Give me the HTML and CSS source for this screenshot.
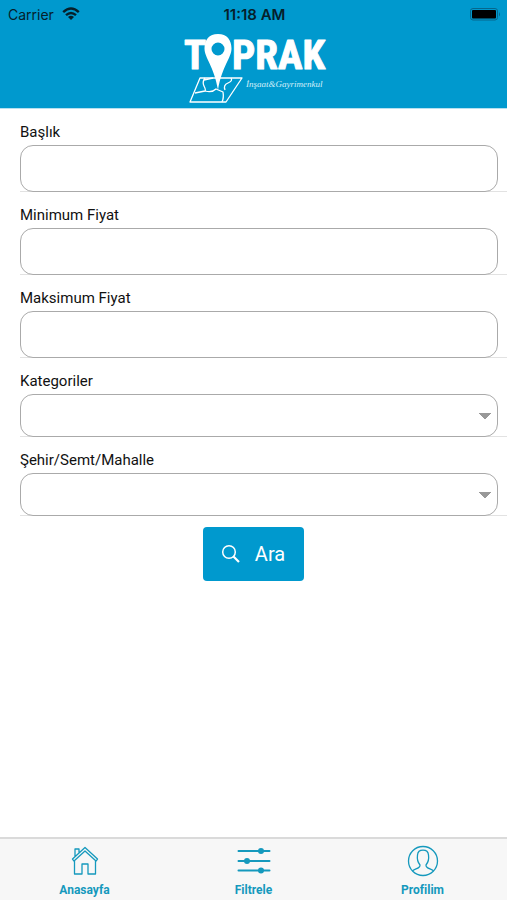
FILE: index.html
```html
<!DOCTYPE html>
<html lang="tr">
<head>
<meta charset="utf-8">
<meta name="viewport" content="width=device-width, initial-scale=1">
<title>Toprak</title>
<link rel="stylesheet" href="styles.css">
</head>
<body>
<header class="header">
  <div class="status">
    <div class="carrier">
      <span>Carrier</span>
      <svg width="18" height="14" viewBox="0 0 18 14" fill="none" stroke="#06202b" stroke-width="2.4">
        <path d="M1.2 5.2Q9-2 16.8 5.2M4 8.2Q9 3.6 14 8.2"/>
        <path d="M6 10Q9 7.4 12 10L9 13Z" fill="#06202b" stroke="none"/>
      </svg>
    </div>
    <time class="clock">11:18 AM</time>
    <svg class="battery" width="31" height="13" viewBox="0 0 31 13">
      <rect x=".5" y=".5" width="27" height="11.5" rx="2.5" fill="none" stroke="#06678c"/>
      <rect x="2" y="2" width="24" height="8.5" rx="1" fill="#000"/>
      <path d="M29 4q2 2.3 0 4.600z" fill="#06678c"/>
    </svg>
  </div>
  <svg class="logo" width="142" height="72" viewBox="0 0 142 72" role="img" aria-label="Toprak İnşaat &amp; Gayrimenkul">
    <g fill="none" stroke="#fff" stroke-width="1.300" stroke-linejoin="round">
      <path d="M17 46H59L43 70H7Z"/>
      <path d="M22 46Q19 50 21 54T22 59L12 61M22 59Q29 61 33 57L40 60Q41 66 39 70M21 48L30 46M42 58Q40 53 45 51T48 46"/>
    </g>
    <text class="logo-name" x="1" y="37">T</text>
    <path d="M35 2C26 2 21.500 8 21.500 16.500C21.500 26 31 34 35 58C39 34 48.500 26 48.500 16.500C48.500 8 44 2 35 2ZM35 10.500A6.500 6.500 0 0 1 35 23.500A6.500 6.500 0 0 1 35 10.500Z" fill="#fff" fill-rule="evenodd"/>
    <text class="logo-name" x="49" y="37">PRAK</text>
    <text class="logo-tag" x="63" y="55">İnşaat&amp;Gayrimenkul</text>
  </svg>
</header>
<main class="content">
  <form class="filters">
    <div class="field"><label for="title">Başlık</label><input id="title" type="text"></div>
    <div class="field"><label for="min">Minimum Fiyat</label><input id="min" type="text" inputmode="numeric"></div>
    <div class="field"><label for="max">Maksimum Fiyat</label><input id="max" type="text" inputmode="numeric"></div>
    <div class="field"><label for="category">Kategoriler</label><select id="category"><option></option></select></div>
    <div class="field"><label for="place">Şehir/Semt/Mahalle</label><select id="place"><option></option></select></div>
    <button class="search" type="submit">
      <svg width="20" height="20" viewBox="0 0 20 20" fill="none" stroke="#fff" stroke-width="1.500">
        <circle cx="8" cy="8" r="6.300"/><path d="M12.500 12.500L18 18" stroke-width="2.200"/>
      </svg>
      <span>Ara</span>
    </button>
  </form>
</main>
<nav class="tabs">
  <a href="#home">
    <svg width="34" height="32" viewBox="0 0 34 32" fill="none" stroke="#1599bd" stroke-width="1.300" stroke-linejoin="round">
      <path d="M6.500 16V29H14V19H20V29H27.500V16M4.500 14L17 2.500L29.500 14L28 16L17 6L6 16ZM7 11.500V4H11V8"/>
    </svg>
    <span>Anasayfa</span>
  </a>
  <a href="#filter">
    <svg width="34" height="32" viewBox="0 0 34 32" fill="#1599bd" stroke="#1599bd" stroke-width="2" stroke-linecap="round">
      <path d="M1.500 6H32.500M1.500 16H32.500M1.500 25.500H32.500"/>
      <g stroke="none"><circle cx="24" cy="6" r="3"/><circle cx="10" cy="16" r="3"/><circle cx="24" cy="25.500" r="3"/></g>
    </svg>
    <span>Filtrele</span>
  </a>
  <a href="#profile">
    <svg width="34" height="32" viewBox="0 0 34 32" fill="none" stroke="#1599bd" stroke-width="1.300">
      <circle cx="17" cy="16" r="14.500"/>
      <path d="M6.500 26C8 23.500 14.500 24 14 20C11.500 17 11 13.500 11.500 10C12 3.500 22 3.500 22.500 10C23 13.500 22.500 17 20 20C19.500 24 26 23.500 27.500 26"/>
    </svg>
    <span>Profilim</span>
  </a>
</nav>
</body>
</html>
```
FILE: styles.css
```css
* {
  box-sizing: border-box;
}

body {
  display: flex;
  flex-direction: column;
  min-height: 100vh;
  margin: 0;
  background: #fff;
  color: #111;
  font-family: Roboto, sans-serif;
}

.header {
  display: flex;
  flex-direction: column;
  align-items: center;
  padding-bottom: 4px;
  background: #0099ce;
  border-bottom: 1px solid #b5e0f0;
}

.status {
  display: grid;
  grid-template-columns: 1fr auto 1fr;
  align-items: center;
  width: 100%;
  height: 28px;
  padding: 0 6px 0 8px;
  color: #06202b;
  font: 14px Inter, sans-serif;
}

.carrier {
  display: flex;
  align-items: center;
  gap: 8px;
}

.clock {
  font-size: 15px;
  font-weight: 600;
}

.battery {
  justify-self: end;
}

.logo {
  margin-top: 4px;
  overflow: visible;
}

.logo-name {
  fill: #fff;
  stroke: #fff;
  stroke-width: 1px;
  stroke-linejoin: round;
  font: bold 41px "Roboto Condensed", Roboto, sans-serif;
}

.logo-tag {
  fill: #d5f0fa;
  font: italic 9px "Liberation Serif", serif;
}

.content {
  flex: 1;
}

.filters {
  display: flex;
  flex-direction: column;
  padding-left: 20px;
}

.field {
  display: flex;
  flex-direction: column;
  padding-top: 13px;
  border-bottom: 1px solid #e2e2e2;
}

.field label {
  margin-bottom: 3px;
  font-size: 15px;
  line-height: 20px;
}

.field input,
.field select {
  height: 47px;
  margin: 0 9px -1px 0;
  padding: 0 16px;
  border: 1px solid #aaa;
  border-radius: 13px;
  background: #fff;
  font: inherit;
}

.field select {
  height: 43px;
  appearance: none;
  background: linear-gradient(to bottom right, #999 50%, transparent 51%) right 6px center / 6px 6px no-repeat,
    linear-gradient(to bottom left, #999 50%, transparent 51%) right 12px center / 6px 6px no-repeat,
    #fff;
}

.search {
  display: flex;
  align-items: center;
  align-self: center;
  gap: 14px;
  height: 54px;
  margin: 11px 20px 0 0;
  padding: 0 19px 0 18px;
  border: 0;
  border-radius: 4px;
  background: #0099ce;
  color: #fff;
  font: 20px Roboto, sans-serif;
}

.tabs {
  display: grid;
  grid-template-columns: repeat(3, 1fr);
  background: #f7f7f7;
  border-top: 2px solid #dadada;
}

.tabs a {
  display: flex;
  flex-direction: column;
  align-items: center;
  gap: 5px;
  padding: 6px 0 2px;
  color: #1599bd;
  font-size: 12px;
  font-weight: 700;
  line-height: 16px;
  text-decoration: none;
}
```
